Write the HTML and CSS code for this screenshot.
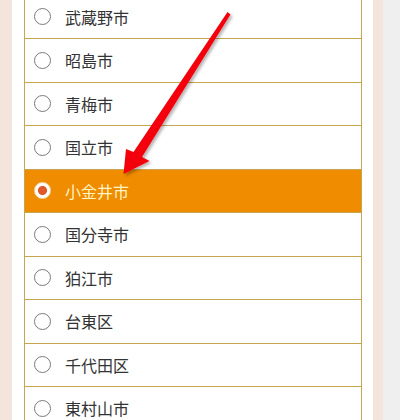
FILE: index.html
```html
<!DOCTYPE html>
<html lang="ja">
<head>
<meta charset="utf-8">
<link rel="stylesheet" href="styles.css">
</head>
<body>
<div class="page">
  <ul class="list">
    <li class="row"><span class="radio"></span><span class="label">武蔵野市</span></li>
    <li class="row"><span class="radio"></span><span class="label">昭島市</span></li>
    <li class="row"><span class="radio"></span><span class="label">青梅市</span></li>
    <li class="row"><span class="radio"></span><span class="label">国立市</span></li>
    <li class="row selected"><span class="radio"></span><span class="label">小金井市</span></li>
    <li class="row"><span class="radio"></span><span class="label">国分寺市</span></li>
    <li class="row"><span class="radio"></span><span class="label">狛江市</span></li>
    <li class="row"><span class="radio"></span><span class="label">台東区</span></li>
    <li class="row"><span class="radio"></span><span class="label">千代田区</span></li>
    <li class="row"><span class="radio"></span><span class="label">東村山市</span></li>
  </ul>
</div>
<svg class="arrow" width="400" height="420" viewBox="0 0 400 420">
  <defs>
    <filter id="sh" x="-20%" y="-20%" width="140%" height="140%">
      <feDropShadow dx="2" dy="2" stdDeviation="1.5" flood-color="#000" flood-opacity="0.3"/>
    </filter>
  </defs>
  <polygon filter="url(#sh)" fill="#f4060a" points="227.5,12 230.5,14.5 142,157 149.5,161 123.5,174 126,149 133.5,152"/>
</svg>
</body>
</html>
```
FILE: styles.css
```css
html, body {
  margin: 0;
  padding: 0;
}
body {
  background: #efefef;
  width: 400px;
  height: 420px;
  overflow: hidden;
  position: relative;
  font-family: "Noto Sans CJK JP", "Noto Sans", sans-serif;
}
.page {
  box-sizing: border-box;
  width: 383px;
  height: 420px;
  background: #fff;
  border-left: 12px solid #f3e5dc;
  border-right: 10px solid #f3e5dc;
  padding: 0 11px 0 12px;
  overflow: hidden;
}
.list {
  list-style: none;
  margin: -4.5px 0 0 0;
  padding: 0;
  border-left: 1px solid #c6a652;
  border-right: 1px solid #c6a652;
}
.row {
  box-sizing: border-box;
  height: 43.5px;
  border-bottom: 1px solid #c6a652;
  display: flex;
  align-items: center;
  padding-left: 8.5px;
  gap: 14.5px;
  background: #fff;
}
.radio {
  box-sizing: border-box;
  width: 17px;
  height: 17px;
  border-radius: 50%;
  border: 1px solid #7a7a7a;
  background: #fff;
  flex: none;
}
.label {
  font-size: 16px;
  color: #333;
  line-height: 1;
}
.row.selected {
  background: #ef8c00;
}
.row.selected .label {
  color: #fff4c6;
}
.row.selected .radio {
  border: 1px solid #f5d9b0;
  background: radial-gradient(circle, #e0592a 0 4.2px, #fff 4.8px);
}
.arrow {
  position: absolute;
  left: 0;
  top: 0;
  pointer-events: none;
}
```
